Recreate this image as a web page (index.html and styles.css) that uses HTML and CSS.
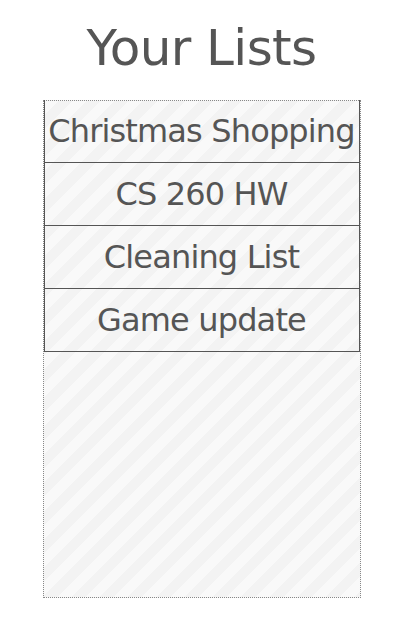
FILE: index.html
```html
<!DOCTYPE html>
<html>
<head>
<meta charset="utf-8">
<link rel="stylesheet" href="styles.css">
</head>
<body>
<div class="page">
  <h1 class="title">Your Lists</h1>
  <div class="panel">
    <ul class="lists">
      <li class="list-item">Christmas Shopping</li>
      <li class="list-item">CS 260 HW</li>
      <li class="list-item">Cleaning List</li>
      <li class="list-item">Game update</li>
    </ul>
  </div>
</div>
</body>
</html>
```
FILE: styles.css
```css
html, body {
  margin: 0;
  padding: 0;
  background: #fff;
}
body {
  font-family: "DejaVu Sans", "Liberation Sans", sans-serif;
  color: #555;
}
.page {
  width: 401px;
  padding-left: 2px;
  box-sizing: border-box;
  display: flex;
  flex-direction: column;
  align-items: center;
}
.title {
  margin: 0 0 23px 0;
  padding-top: 19px;
  font-size: 50px;
  line-height: 58px;
  font-weight: normal;
  letter-spacing: -0.6px;
}
.panel {
  width: 318px;
  height: 498px;
  box-sizing: border-box;
  border: 1px dotted #888;
  background: repeating-linear-gradient(135deg, #f9f9f9 0 10px, #f3f3f3 10px 20px);
}
.lists {
  list-style: none;
  margin: -1px 0 0 0;
  padding: 0;
}
.list-item {
  height: 63px;
  box-sizing: border-box;
  border: 1px solid #555;
  border-top: none;
  display: flex;
  align-items: center;
  justify-content: center;
  font-size: 32px;
  letter-spacing: -0.85px;
  white-space: nowrap;
  padding-bottom: 1px;
}
```
